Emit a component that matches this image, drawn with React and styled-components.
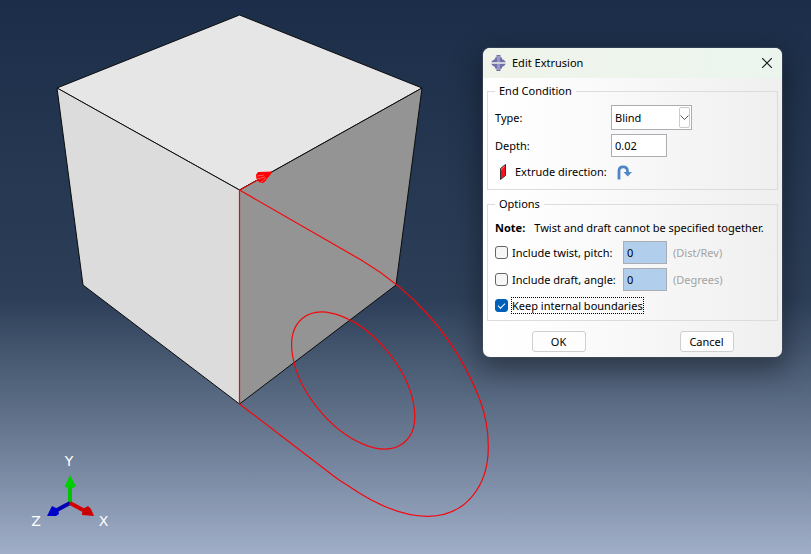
import React, { useState } from "react";
import styled, { createGlobalStyle, css } from "styled-components";

const GlobalStyle = createGlobalStyle`
  *, *::before, *::after { box-sizing: border-box; }
  body { margin: 0; }
`;

const uiFont = css`
  font-family: "Noto Sans", "Open Sans", sans-serif;
  font-size: 11px;
  line-height: 18px;
  color: #000;
`;

const Viewport = styled.main`
  ${uiFont}
  position: relative;
  min-height: 100vh;
  overflow: hidden;
  background: linear-gradient(#1b2d48 0%, #2d3f58 54%, #65758e 77%, #a0aec8 100%);
`;

const Scene = styled.svg`
  display: block;
  width: 100%;
  height: 100vh;
`;

const AxisLabel = styled.text`
  font-family: "DejaVu Sans", sans-serif;
  font-size: 14px;
  fill: #fff;
`;

const Dialog = styled.form`
  position: absolute;
  top: 48px;
  right: 29px;
  width: 299px;
  overflow: hidden;
  border-radius: 7px;
  background: linear-gradient(90deg, #fff 0%, #fdfdfd 20%, #efefef 100%);
  box-shadow: 0 0 1px 1px rgba(70, 80, 95, 0.6), 0 10px 28px 4px rgba(0, 0, 0, 0.36);
`;

const TitleBar = styled.header`
  display: flex;
  align-items: center;
  gap: 6px;
  height: 30px;
  padding: 0 10px 0 8px;
  background: linear-gradient(90deg, #f0f4eb, #ebf5ee);
`;

const Title = styled.h1`
  flex: 1;
  margin: 0;
  font-size: 11px;
  font-weight: 400;
`;

const IconButton = styled.button`
  display: flex;
  padding: 0;
  border: 0;
  background: none;
`;

const FlipButton = styled(IconButton)`
  padding: 0 2px;
`;

const Body = styled.div`
  display: grid;
  gap: 5px;
  padding: 4px 4px 5px;
`;

const Group = styled.fieldset`
  min-width: 0;
  margin: 0;
  padding: 0 7px;
  border: 1px solid #dcdcdc;
`;

const Legend = styled.legend`
  padding: 0 4px;
`;

const Rows = styled.div`
  display: grid;
  gap: 4px;
  padding: 5px 0 ${(p) => p.$bottom}px;
`;

const FieldRow = styled.div`
  display: grid;
  grid-template-columns: 116px 1fr;
  align-items: center;
`;

const DirectionRow = styled.div`
  display: flex;
  align-items: center;
  gap: 8px;
  height: 22px;
  padding-left: 4px;
`;

const fieldBox = css`
  ${uiFont}
  padding: 0 3px;
  border: 1px solid #abadb3;
  border-radius: 0;
  background: #fff;
  outline: 0;
`;

const SelectBox = styled.div`
  position: relative;
  width: 81px;
  height: 25px;
`;

const Select = styled.select`
  ${fieldBox}
  width: 100%;
  height: 100%;
  appearance: none;
`;

const SelectArrow = styled.span`
  position: absolute;
  top: 2px;
  right: 2px;
  bottom: 2px;
  display: flex;
  align-items: center;
  justify-content: center;
  width: 11px;
  border: 1px solid #ccc;
  border-radius: 2px;
  background: #fdfdfd;
  pointer-events: none;
`;

const NumberField = styled.input`
  ${fieldBox}
  width: ${(p) => p.$width}px;
  height: 23px;
  &:disabled { background: #b1ceec; opacity: 1; }
`;

const Note = styled.p`
  display: flex;
  align-items: flex-end;
  gap: 9px;
  height: 19px;
  margin: 0;
  white-space: nowrap;
`;

const OptionRow = styled.div`
  display: grid;
  grid-template-columns: 122px 44px 1fr;
  column-gap: 6px;
  align-items: center;
`;

const Option = styled.label`
  display: flex;
  align-items: center;
  gap: 4px;
  white-space: nowrap;
`;

const KeepOption = styled(Option)`
  gap: 3px;
  height: 21px;
`;

const FocusText = styled.span`
  line-height: 15px;
  border: 1px dotted #000;
`;

const Unit = styled.span`
  color: #a3a3a3;
`;

const Tick = styled.input`
  flex: none;
  display: grid;
  place-items: center;
  width: 13px;
  height: 13px;
  margin: 0;
  appearance: none;
  border: 1px solid #666;
  border-radius: 3px;
  background: #f6f6f6;
  &:checked { border-color: #005fb8; background: #005fb8; }
  &:checked::before {
    content: "";
    width: 7px;
    height: 4px;
    margin-bottom: 2px;
    border: solid #fff;
    border-width: 0 0 1px 1px;
    transform: rotate(-45deg);
  }
`;

const Actions = styled.footer`
  display: grid;
  grid-template-columns: 1fr 1fr;
  column-gap: 5px;
  justify-items: center;
  padding-top: 5px;
`;

const PushButton = styled.button`
  ${uiFont}
  width: 54px;
  height: 21px;
  padding: 0;
  border: 1px solid #cfcfcf;
  border-radius: 3px;
  background: #fdfdfd;
`;

function Model() {
  return (
    <Scene viewBox="0 0 811 554" preserveAspectRatio="xMinYMin meet" role="img" aria-label="Extrusion preview">
      <g stroke="#0c0c0c" strokeLinejoin="round">
        <path d="M239.500 15 422 88 239.500 190 57 88Z" fill="#e6e6e6" />
        <path d="M57 88 239.500 190V404L83 285Z" fill="#dcdcdc" />
        <path d="M422 88 239.500 190V404L396 285Z" fill="#949494" />
      </g>
      <g fill="none" stroke="#f5080c" strokeWidth="1.2">
        <path d="M239.500 190V404" stroke="#f00" />
        <path d="M239.500 190 362 260.500C388 276 410 294 430 317C451 341 468 369 480 400C486 416 488.300 431 488.300 447C488.300 488 464 516.300 427.500 516.300C400 516.300 373 503 347 485Q340 481 333 475.500L239.500 404" />
        <ellipse cx="353.200" cy="380.500" rx="80.300" ry="45" transform="rotate(50.900 353.200 380.500)" />
      </g>
      <g stroke="#f00" fill="#f00">
        <path d="M240 190 272 172" fill="none" />
        <path d="M272 172 258 172.500 256.500 175 257 179 260 182.500 264 182Z" />
        <path d="M257 176 264 175M257 179 265 177M260 183 266 178" stroke="#ee9a9a" strokeWidth=".6" />
      </g>
      <path d="M70 503V487" stroke="#00c400" strokeWidth="4" />
      <path d="M70 475 76 486.500Q70 490 64.500 486.500Z" fill="#00ce00" />
      <path d="M70 503 57 510" stroke="#0000b4" strokeWidth="4" />
      <path d="M47 516 52 506 58 509 59 514 56 516Z" fill="#0000cc" />
      <path d="M70 503 83 510" stroke="#d40000" strokeWidth="4" />
      <path d="M94 516 82 515 82.500 509 88 506 91 509Z" fill="#cc0000" />
      <AxisLabel x="69" y="466" textAnchor="middle">Y</AxisLabel>
      <AxisLabel x="36" y="526" textAnchor="middle">Z</AxisLabel>
      <AxisLabel x="103.500" y="526" textAnchor="middle">X</AxisLabel>
    </Scene>
  );
}

const AppIcon = () => (
  <svg width="15" height="16" viewBox="0 0 15 16" aria-hidden="true">
    <path d="M5.500 0h4v2.500H11V4l2.500 1.500L15 7.500H0L1.500 5.500 4 4V2.500h1.500z" fill="#7270a8" />
    <path d="M5.500 16h4v-2.500H11V12l2.500-1.500L15 8.500H0l1.500 2L4 12v1.500h1.500z" fill="#7270a8" />
    <path d="M6 1h3v6H6zM6 9h3v6H6z" fill="#9896cc" />
    <path d="M0 7.500h15v1H0z" fill="#f0f4eb" />
  </svg>
);

const CloseIcon = () => (
  <svg width="10" height="10" viewBox="0 0 10 10" aria-hidden="true">
    <path d="M0 0l10 10M10 0 0 10" stroke="#1a1a1a" strokeWidth="1.200" />
  </svg>
);

const ProfileIcon = () => (
  <svg width="8" height="16" viewBox="0 0 8 16" aria-hidden="true">
    <path d="M1.500 4.500 6.500.5v11l-5 4z" fill="#f3131a" stroke="#333" />
    <path d="M2.500 6V5l3-2.500" fill="none" stroke="#ff7b7b" />
  </svg>
);

const FlipIcon = () => (
  <svg width="15" height="15" viewBox="0 0 15 15" aria-hidden="true">
    <path d="M2 14.500V6Q2 1.800 6.200 1.800T10.500 6V8" fill="none" stroke="#4f86c6" strokeWidth="2.800" />
    <path d="M6.500 7h8.500L10.700 11.500z" fill="#4f86c6" />
  </svg>
);

export default function App() {
  const [depth, setDepth] = useState("0.02");
  const [keep, setKeep] = useState(true);
  return (
    <Viewport>
      <GlobalStyle />
      <Model />
      <Dialog role="dialog" aria-labelledby="dialog-title" onSubmit={(e) => e.preventDefault()}>
        <TitleBar>
          <AppIcon />
          <Title id="dialog-title">Edit Extrusion</Title>
          <IconButton type="button" aria-label="Close"><CloseIcon /></IconButton>
        </TitleBar>
        <Body>
          <Group>
            <Legend>End Condition</Legend>
            <Rows $bottom={6}>
              <FieldRow>
                <label htmlFor="type">Type:</label>
                <SelectBox>
                  <Select id="type" defaultValue="Blind"><option>Blind</option></Select>
                  <SelectArrow>
                    <svg width="9" height="5" viewBox="0 0 9 5" aria-hidden="true">
                      <path d="M.5.5l4 4 4-4" fill="none" stroke="#555" />
                    </svg>
                  </SelectArrow>
                </SelectBox>
              </FieldRow>
              <FieldRow>
                <label htmlFor="depth">Depth:</label>
                <NumberField id="depth" $width={56} value={depth} onChange={(e) => setDepth(e.target.value)} />
              </FieldRow>
              <DirectionRow>
                <ProfileIcon />
                <span>Extrude direction:</span>
                <FlipButton type="button" aria-label="Flip direction"><FlipIcon /></FlipButton>
              </DirectionRow>
            </Rows>
          </Group>
          <Group>
            <Legend>Options</Legend>
            <Rows $bottom={4}>
              <Note><strong>Note:</strong><span>Twist and draft cannot be specified together.</span></Note>
              <OptionRow>
                <Option><Tick type="checkbox" />Include twist, pitch:</Option>
                <NumberField aria-label="Pitch" $width={44} defaultValue="0" disabled />
                <Unit>(Dist/Rev)</Unit>
              </OptionRow>
              <OptionRow>
                <Option><Tick type="checkbox" />Include draft, angle:</Option>
                <NumberField aria-label="Angle" $width={44} defaultValue="0" disabled />
                <Unit>(Degrees)</Unit>
              </OptionRow>
              <KeepOption>
                <Tick type="checkbox" checked={keep} onChange={(e) => setKeep(e.target.checked)} />
                <FocusText>Keep internal boundaries</FocusText>
              </KeepOption>
            </Rows>
          </Group>
          <Actions>
            <PushButton type="submit">OK</PushButton>
            <PushButton type="button">Cancel</PushButton>
          </Actions>
        </Body>
      </Dialog>
    </Viewport>
  );
}
